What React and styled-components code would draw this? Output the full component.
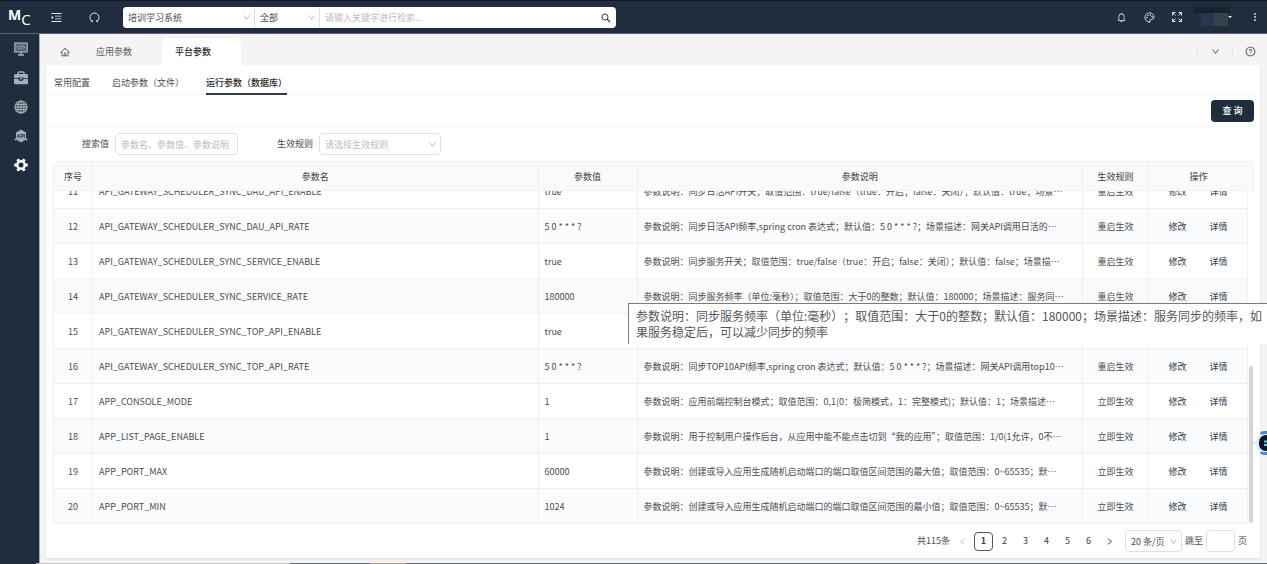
import React,{Component} from 'react';
import styled,{createGlobalStyle} from 'styled-components';
import {
  AiOutlineMenuUnfold,
  AiOutlineHome,
  AiOutlineBell,
  AiOutlineDown,
  AiOutlineLeft,
  AiOutlineRight,
  AiOutlineQuestionCircle,
} from 'react-icons/ai';
import { BsThreeDotsVertical } from 'react-icons/bs';
import { Palette } from 'lucide-react';

const GlobalStyle = createGlobalStyle`
  * {
    box-sizing: border-box;
  }
  body {
    margin: 0;
    font-family: "Noto Sans CJK SC", "Noto Sans", sans-serif;
    font-size: 9px;
    line-height: 16px;
    color: #4d4d4d;
    background: #f4f4f4;
  }
  button, input, select {
    font: inherit;
    color: inherit;
    margin: 0;
    padding: 0;
    border: 0;
    outline: 0;
    background: transparent;
  }
  button {
    cursor: pointer;
  }
  a {
    color: inherit;
    text-decoration: none;
  }
`;

const Page = styled.div`
  display: flex;
  flex-direction: column;
  height: 100vh;
  overflow: hidden;
`;

const TopBar = styled.header`
  display: flex;
  align-items: center;
  flex: none;
  height: 34px;
  padding: 0 0 0 8px;
  border-top: 1px solid #111821;
  border-bottom: 1px solid #5d6677;
  background: #202d3e;
  color: #e3e6ea;
`;

const Logo = styled.a`
  display: flex;
  width: 40px;
  font-family: "Open Sans", sans-serif;
  font-size: 14px;
  line-height: 16px;
  font-weight: 700;
  color: #fff;
`;

const LogoTail = styled.span`
  padding-top: 4px;
  font-size: 15px;
  font-weight: 400;
`;

const IconButton = styled.button`
  display: flex;
  align-items: center;
  justify-content: center;
  width: ${props => props.$width || 28}px;
  height: 22px;
  font-size: ${props => props.$size || 11}px;
`;

const LeftTools = styled.div`
  display: flex;
  gap: 21px;
  width: 75px;
`;

const RightTools = styled.div`
  display: flex;
  align-items: center;
  margin-left: auto;
`;

const User = styled.button`
  position: relative;
  width: 36px;
  height: 20px;
  margin: 0 12px 0 3px;
  background: linear-gradient(#18212d 6px, transparent 6px);

  &::before {
    content: '';
    position: absolute;
    left: 7px;
    top: 6px;
    width: 27px;
    height: 13px;
    background: linear-gradient(90deg, #28364e 13px, #36434f 13px);
  }
  &::after {
    content: '';
    position: absolute;
    right: -2px;
    top: 9px;
    border: 2px solid transparent;
    border-top-color: #fff;
  }
`;

const GlobalSearch = styled.form`
  display: flex;
  width: 493px;
  height: 21px;
  border-radius: 4px;
  overflow: hidden;
  background: #fff;
  color: #444;
`;

const SelectWrap = styled.div`
  display: flex;
  align-items: center;
  width: ${props => props.$width}px;
  height: ${props => (props.$bare ? 21 : 22)}px;
  border: ${props => (props.$bare ? '0' : '1px solid #e0e0e0')};
  border-right: 1px solid #e0e0e0;
  border-radius: ${props => (props.$bare ? 0 : 4)}px;
  padding-right: 3px;
  background: #fff;

  select {
    flex: 1;
    min-width: 0;
    height: 100%;
    padding: 1px 0 0 5px;
    appearance: none;
    color: ${props => (props.$empty ? '#bdbdbd' : '#4d4d4d')};
  }
  svg {
    flex: none;
    width: 9px;
    height: 9px;
    margin-left: -9px;
    color: #b5b5b5;
    pointer-events: none;
  }
`;

const SearchInput = styled.input`
  flex: 1;
  min-width: 0;
  padding: 1px 0 0 5px;

  &::placeholder {
    color: #bdbdbd;
  }
`;

const Content = styled.div`
  display: flex;
  flex: 1;
  min-height: 0;
`;

const Sidebar = styled.nav`
  display: flex;
  flex-direction: column;
  align-items: center;
  flex: none;
  width: 40px;
  padding-left: 2px;
  border-right: 1px solid #a6abb3;
  background: #202d3e;
`;

const SideLink = styled.a`
  display: flex;
  align-items: center;
  height: 29px;
  color: ${props => (props.$active ? '#fff' : '#a5acb5')};
`;

const Main = styled.main`
  display: flex;
  flex-direction: column;
  flex: 1;
  min-width: 0;
  padding: 4px 7px 5px 6px;
`;

const Tabs = styled.div`
  display: flex;
  align-items: center;
  flex: none;
  height: 27px;
  padding-left: 14px;
`;

const PageTab = styled.button`
  position: relative;
  width: 79px;
  height: 27px;
  padding: 1px 0 0 13px;
  text-align: left;
  border-radius: 6px 6px 0 0;
  color: ${props => (props.$active ? '#262626' : '#595959')};
  font-weight: ${props => (props.$active ? 500 : 400)};
  background: ${props => (props.$active ? '#fff' : 'transparent')};

  &::before, &::after {
    content: '';
    display: ${props => (props.$active ? 'block' : 'none')};
    position: absolute;
    bottom: 0;
    width: 4px;
    height: 4px;
  }
  &::before {
    left: -4px;
    background: radial-gradient(circle at 0 0, transparent 4px, #fff 4px);
  }
  &::after {
    right: -4px;
    background: radial-gradient(circle at 100% 0, transparent 4px, #fff 4px);
  }
`;

const HomeButton = styled.button`
  display: flex;
  width: 23px;
  padding-top: 1px;
  font-size: 10px;
  color: #444;
`;

const TabTools = styled.div`
  display: flex;
  align-items: center;
  margin-left: auto;

  button {
    width: 35px;
    height: 8px;
    border-left: 1px solid #e4e4e4;
  }
  button:last-child {
    padding-left: 8px;
    width: 28px;
  }
`;

const Panel = styled.section`
  display: flex;
  flex-direction: column;
  flex: 1;
  min-height: 0;
  background: #fff;
  box-shadow: 0 1px 2px #dcdcdc;
`;

const SubTabs = styled.div`
  display: flex;
  flex: none;
  gap: 22px;
  height: 30px;
  padding: 0 8px;
  border-bottom: 1px solid #f3f3f3;
`;

const SubTab = styled.button`
  height: 30px;
  padding-top: 7px;
  border-bottom: 2px solid ${props => (props.$active ? '#2b3a4d' : 'transparent')};
  color: ${props => (props.$active ? '#262626' : '#4d4d4d')};
  font-weight: ${props => (props.$active ? 500 : 400)};
`;

const Actions = styled.div`
  display: flex;
  align-items: center;
  justify-content: flex-end;
  flex: none;
  height: 32px;
  padding-right: 6px;
  border-bottom: 1px solid #f5f5f5;
`;

const QueryButton = styled.button`
  width: 43px;
  height: 22px;
  padding-top: 1px;
  border-radius: 4px;
  background: #202d3e;
  color: #fff;
  font-weight: 500;
`;

const Filters = styled.form`
  display: flex;
  flex: none;
  gap: 39px;
  height: 34px;
  padding: 6px 36px 0;
`;

const Field = styled.div`
  display: flex;
  align-items: center;
  gap: 6px;
  height: 22px;
`;

const TextInput = styled.input`
  width: ${props => props.$width}px;
  height: 22px;
  padding: 0 5px;
  border: 1px solid #e0e0e0;
  border-radius: 4px;

  &::placeholder {
    color: #bdbdbd;
  }
`;

const TableArea = styled.div`
  position: relative;
  display: flex;
  flex-direction: column;
  flex: 1;
  min-height: 0;
  padding: 0 6px 0 7px;
`;

const HeadWrap = styled.div`
  flex: none;
  padding-right: 5px;
  border: 1px solid #f0f0f0;
  border-radius: 6px 6px 0 0;
  background: #fafafa;
`;

const BodyWrap = styled.div`
  display: flex;
  flex-direction: column;
  justify-content: flex-end;
  flex: 1;
  min-height: 0;
  overflow: hidden;
  margin-right: 6px;
  border-left: 1px solid #f0f0f0;
`;

const Table = styled.table`
  width: 100%;
  table-layout: fixed;
  border-collapse: separate;
  border-spacing: 0;

  th {
    height: 28px;
    padding: 1px 0 0;
    font-weight: 400;
    color: #404040;
    border-right: 1px solid #f0f0f0;
  }
  th:last-child {
    border-right: 0;
  }
`;

const Row = styled.tr`
  background: ${props => (props.$hover ? '#fafafa' : props.$striped ? '#fafbfd' : '#fff')};
`;

const Cell = styled.td`
  height: 35px;
  padding: 2px 6px 0;
  border-right: 1px solid #f0f0f0;
  border-bottom: 1px solid #f0f0f0;
  text-align: ${props => (props.$center ? 'center' : 'left')};
  white-space: nowrap;
  overflow: hidden;
`;

const RowLinks = styled.div`
  display: flex;
  justify-content: center;
  gap: 23px;
  color: #2f3c4c;
`;

const ScrollThumb = styled.div`
  position: absolute;
  right: 7px;
  bottom: 1px;
  width: 4px;
  height: 157px;
  border-radius: 2px;
  background: #d5d5d5;
`;

const Tooltip = styled.div`
  position: absolute;
  left: 582px;
  right: -7px;
  top: 142px;
  min-height: 41px;
  padding: 4px 0 4px 7px;
  border-top: 1px solid #7b7b7b;
  border-left: 1px solid #7b7b7b;
  background: #fff;
  font-size: 12px;
  line-height: 16px;
  text-spacing-trim: space-all;
  color: #575757;
`;

const Pagination = styled.div`
  display: flex;
  align-items: center;
  flex: none;
  height: 34px;
  padding-right: 13px;
  justify-content: flex-end;
`;

const PageButton = styled.button`
  display: flex;
  align-items: center;
  justify-content: center;
  width: 19px;
  height: 19px;
  margin-right: 2px;
  border: 1px solid ${props => (props.$active ? '#4a586a' : 'transparent')};
  border-radius: 4px;
  font-weight: ${props => (props.$active ? 700 : 400)};
  color: ${props => (props.$muted ? '#bdbdbd' : '#404040')};
`;

const Total = styled.span`
  margin-right: 3px;
`;

const PageTools = styled.div`
  display: flex;
  align-items: center;
  gap: 3px;
  margin-left: 4px;

  label {
    display: flex;
    align-items: center;
    gap: 3px;
  }
`;

const Assistant = styled.button`
  position: fixed;
  right: 0;
  bottom: 108px;
  display: flex;
`;

const TaskStrip = styled.div`
  flex: none;
  height: 1px;
  background: linear-gradient(
    90deg,
    #202d3e 36px,
    #c4c4c4 36px 290px,
    #5f6874 290px 370px,
    #b79b80 370px 406px,
    #5f6874 406px
  );
`;

const DesktopIcon = () => (
  <svg width="14" height="14" viewBox="0 0 28 28" fill="none" stroke="currentColor">
    <rect x="1.5" y="2" width="25" height="18" strokeWidth="2.4" fill="currentColor" fillOpacity=".45" />
    <path d="M10 7.500 7 10.500l3 3M18 7.500l3 3-3 3M15.500 7l-3 7" strokeWidth="2" />
    <path d="M14 19v6M8 26h12" strokeWidth="3" />
  </svg>
);

const BriefcaseIcon = () => (
  <svg width="14" height="14" viewBox="0 0 28 28">
    <path d="M8 7V4a2 2 0 0 1 2-2h8a2 2 0 0 1 2 2v3" fill="none" stroke="currentColor" strokeWidth="2.800" />
    <path d="M3 6h22a3 3 0 0 1 3 3v5h-9v-1H9v1H0V9a3 3 0 0 1 3-3z" fill="currentColor" />
    <path d="M0 15.500h9c0 3 2 4.500 5 4.500s5-1.500 5-4.500h9v9a2 2 0 0 1-2 2H2a2 2 0 0 1-2-2z" fill="currentColor" />
    <circle cx="14" cy="15.500" r="2" fill="currentColor" />
  </svg>
);

const GlobeIcon = () => (
  <svg width="14" height="14" viewBox="0 0 28 28" fill="none" stroke="currentColor" strokeWidth="2.200">
    <circle cx="14" cy="14" r="12" fill="currentColor" fillOpacity=".15" />
    <ellipse cx="14" cy="14" rx="6" ry="12" />
    <path d="M14 2v24M4 9h20M4 19h20" />
    <path d="M1 14h26" strokeWidth="2.600" />
  </svg>
);

const ApiIcon = () => (
  <svg width="14" height="14" viewBox="0 0 28 28">
    <path d="M14 1 24 7v14l-10 6-10-6V7z" fill="currentColor" />
    <circle cx="3" cy="21" r="2" fill="currentColor" />
    <circle cx="25" cy="21" r="2" fill="currentColor" />
    <text x="14" y="18" textAnchor="middle" fontSize="10" fontWeight="700" fontFamily="Liberation Sans, sans-serif" fill="#202d3e">API</text>
  </svg>
);

const GearIcon = () => (
  <svg width="14" height="14" viewBox="0 0 28 28" stroke="currentColor" fill="none">
    <circle cx="14" cy="14" r="7.500" strokeWidth="5" />
    {[30, 90, 150, 210, 270, 330].map(angle => (
      <path key={angle} d="M14 5V0.500" strokeWidth="6" transform={`rotate(${angle} 14 14)`} />
    ))}
  </svg>
);

const ReloadIcon = () => (
  <svg width="11" height="11" viewBox="0 0 22 22" fill="none" stroke="currentColor" strokeWidth="2">
    <path d="M6.500 18.800A9 9 0 1 1 15.500 18.800" />
    <path d="M3 19.500H7V16M19 19.500H15V16" strokeWidth="1.400" />
  </svg>
);

const SearchIcon = () => (
  <svg width="10" height="10" viewBox="0 0 20 20" fill="none" stroke="currentColor">
    <circle cx="8" cy="8" r="6" strokeWidth="2" />
    <path d="M12.500 12.500 18 18" strokeWidth="3" />
  </svg>
);

const ExpandIcon = () => (
  <svg width="10" height="10" viewBox="0 0 20 20" fill="none" stroke="currentColor" strokeWidth="2">
    <path d="M1 7V1h6M13 1h6v6M19 13v6h-6M7 19H1v-6" />
    <path d="M2 2l5 5M18 2l-5 5M18 18l-5-5M2 18l5-5" />
  </svg>
);

const AssistantIcon = () => (
  <svg width="15" height="26" viewBox="0 0 15 26">
    <path d="M0 13h6" stroke="#bcd3f5" />
    <circle cx="15" cy="13" r="11" fill="#dfeafc" />
    <path d="M9 4Q10 2.500 12 2.500H15M9 22Q10 23.500 12 23.500H15" stroke="#3f86f7" strokeWidth="3" fill="none" />
    <rect x="7" y="5" width="18" height="16" rx="7" fill="#0a1428" />
    <path d="M12 11.500h3M12 15h3" stroke="#45d6e8" strokeWidth="2" />
  </svg>
);

const sideItems = [
  { id: 'console', label: '控制台', icon: <DesktopIcon /> },
  { id: 'tools', label: '工具', icon: <BriefcaseIcon /> },
  { id: 'network', label: '网络', icon: <GlobeIcon /> },
  { id: 'api', label: '接口', icon: <ApiIcon /> },
  { id: 'setting', label: '设置', icon: <GearIcon /> },
];

const restart = '重启生效';
const instant = '立即生效';

const params = [
  { id: 11, name: 'API_GATEWAY_SCHEDULER_SYNC_DAU_API_ENABLE', value: 'true', rule: restart, desc: '参数说明：同步日活API开关；取值范围：true/false（true：开启；false：关闭）；默认值：true；场景…' },
  { id: 12, name: 'API_GATEWAY_SCHEDULER_SYNC_DAU_API_RATE', value: '5 0 * * * ?', rule: restart, desc: '参数说明：同步日活API频率,spring cron 表达式；默认值：5 0 * * * ?；场景描述：网关API调用日活的…' },
  { id: 13, name: 'API_GATEWAY_SCHEDULER_SYNC_SERVICE_ENABLE', value: 'true', rule: restart, desc: '参数说明：同步服务开关；取值范围：true/false（true：开启；false：关闭）；默认值：false；场景描…' },
  { id: 14, name: 'API_GATEWAY_SCHEDULER_SYNC_SERVICE_RATE', value: '180000', rule: restart, desc: '参数说明：同步服务频率（单位:毫秒）；取值范围：大于0的整数；默认值：180000；场景描述：服务同…' },
  { id: 15, name: 'API_GATEWAY_SCHEDULER_SYNC_TOP_API_ENABLE', value: 'true', rule: restart, desc: '' },
  { id: 16, name: 'API_GATEWAY_SCHEDULER_SYNC_TOP_API_RATE', value: '5 0 * * * ?', rule: restart, desc: '参数说明：同步TOP10API频率,spring cron 表达式；默认值：5 0 * * * ?；场景描述：网关API调用top10…' },
  { id: 17, name: 'APP_CONSOLE_MODE', value: '1', rule: instant, desc: '参数说明：应用前端控制台模式；取值范围：0,1(0：极简模式，1：完整模式)；默认值：1；场景描述…' },
  { id: 18, name: 'APP_LIST_PAGE_ENABLE', value: '1', rule: instant, desc: '参数说明：用于控制用户操作后台，从应用中能不能点击切到“我的应用”；取值范围：1/0(1允许，0不…' },
  { id: 19, name: 'APP_PORT_MAX', value: '60000', rule: instant, desc: '参数说明：创建或导入应用生成随机启动端口的端口取值区间范围的最大值；取值范围：0~65535；默…' },
  { id: 20, name: 'APP_PORT_MIN', value: '1024', rule: instant, desc: '参数说明：创建或导入应用生成随机启动端口的端口取值区间范围的最小值；取值范围：0~65535；默…' },
];

const NarrowCol = styled.col`
  width: ${props => props.$width}px;
`;

const Columns = () => (
  <colgroup>
    <NarrowCol $width={39} />
    <col />
    <NarrowCol $width={99} />
    <col />
    <NarrowCol $width={66} />
    <NarrowCol $width={99} />
  </colgroup>
);

class App extends Component {
  state = {
    hoveredId: 14,
    currentPage: 1,
    activeSubTab: '运行参数（数据库）',
    searchValue: '',
    keyword: '',
    jumpTo: '',
  }

  changePage = page => {
    this.setState({ currentPage: page })
  }

  changeSubTab = name => {
    this.setState({ activeSubTab: name })
  }

  changeInput = event => {
    this.setState({ [event.target.name]: event.target.value })
  }

  renderTopBar() {
    const {keyword} = this.state
    return (
      <TopBar>
        <Logo href="#home">M<LogoTail>C</LogoTail></Logo>
        <LeftTools>
          <IconButton $width={17} $size={13} aria-label="展开菜单"><AiOutlineMenuUnfold /></IconButton>
          <IconButton $width={17} aria-label="刷新"><ReloadIcon /></IconButton>
        </LeftTools>
        <GlobalSearch>
          <SelectWrap $width={132} $bare>
            <select aria-label="系统"><option>培训学习系统</option></select>
            <AiOutlineDown />
          </SelectWrap>
          <SelectWrap $width={65} $bare>
            <select aria-label="范围"><option>全部</option></select>
            <AiOutlineDown />
          </SelectWrap>
          <SearchInput
            name="keyword"
            aria-label="关键字"
            placeholder="请输入关键字进行检索..."
            value={keyword}
            onChange={this.changeInput}
          />
          <IconButton type="button" $width={20} aria-label="检索"><SearchIcon /></IconButton>
        </GlobalSearch>
        <RightTools>
          <IconButton aria-label="通知"><AiOutlineBell /></IconButton>
          <IconButton aria-label="主题"><Palette size={11} /></IconButton>
          <IconButton aria-label="全屏"><ExpandIcon /></IconButton>
          <User aria-label="用户" />
          <IconButton $width={25} $size={10} aria-label="更多"><BsThreeDotsVertical /></IconButton>
        </RightTools>
      </TopBar>
    )
  }

  renderTable() {
    const {hoveredId} = this.state
    return (
      <TableArea>
        <HeadWrap>
          <Table>
            <Columns />
            <thead>
              <tr>
                <th>序号</th>
                <th>参数名</th>
                <th>参数值</th>
                <th>参数说明</th>
                <th>生效规则</th>
                <th>操作</th>
              </tr>
            </thead>
          </Table>
        </HeadWrap>
        <BodyWrap>
          <Table>
            <Columns />
            <tbody>
              {params.map(item => (
                <Row key={item.id} $striped={item.id % 2 === 0} $hover={item.id === hoveredId}>
                  <Cell $center>{item.id}</Cell>
                  <Cell>{item.name}</Cell>
                  <Cell>{item.value}</Cell>
                  <Cell>{item.desc}</Cell>
                  <Cell $center>{item.rule}</Cell>
                  <Cell $center>
                    <RowLinks>
                      <a href="#edit">修改</a>
                      <a href="#detail">详情</a>
                    </RowLinks>
                  </Cell>
                </Row>
              ))}
            </tbody>
          </Table>
        </BodyWrap>
        <ScrollThumb />
        <Tooltip role="tooltip">
          参数说明：同步服务频率（单位:毫秒）；取值范围：大于0的整数；默认值：180000；场景描述：服务同步的频率，如果服务稳定后，可以减少同步的频率
        </Tooltip>
      </TableArea>
    )
  }

  renderPagination() {
    const {currentPage,jumpTo} = this.state
    return (
      <Pagination>
        <Total>共115条</Total>
        <PageButton $muted aria-label="上一页"><AiOutlineLeft /></PageButton>
        {[1, 2, 3, 4, 5, 6].map(page => (
          <PageButton key={page} $active={page === currentPage} onClick={() => this.changePage(page)}>
            {page}
          </PageButton>
        ))}
        <PageButton aria-label="下一页"><AiOutlineRight /></PageButton>
        <PageTools>
          <SelectWrap $width={57}>
            <select aria-label="每页条数"><option>20 条/页</option></select>
            <AiOutlineDown />
          </SelectWrap>
          <label>
            跳至
            <TextInput $width={29} name="jumpTo" value={jumpTo} onChange={this.changeInput} />
            页
          </label>
        </PageTools>
      </Pagination>
    )
  }

  render() {
    const {activeSubTab,searchValue} = this.state
    return (
      <Page lang="zh-CN">
        <GlobalStyle />
        {this.renderTopBar()}
        <Content>
          <Sidebar>
            {sideItems.map(item => (
              <SideLink key={item.id} href={`#${item.id}`} aria-label={item.label} $active={item.id === 'setting'}>
                {item.icon}
              </SideLink>
            ))}
          </Sidebar>
          <Main>
            <Tabs>
              <HomeButton aria-label="首页"><AiOutlineHome /></HomeButton>
              <PageTab>应用参数</PageTab>
              <PageTab $active>平台参数</PageTab>
              <TabTools>
                <IconButton $size={9} aria-label="标签列表"><AiOutlineDown /></IconButton>
                <IconButton aria-label="帮助"><AiOutlineQuestionCircle /></IconButton>
              </TabTools>
            </Tabs>
            <Panel>
              <SubTabs>
                {['常用配置', '启动参数（文件）', '运行参数（数据库）'].map(name => (
                  <SubTab key={name} $active={name === activeSubTab} onClick={() => this.changeSubTab(name)}>
                    {name}
                  </SubTab>
                ))}
              </SubTabs>
              <Actions>
                <QueryButton>查 询</QueryButton>
              </Actions>
              <Filters>
                <Field>
                  <label htmlFor="searchValue">搜索值</label>
                  <TextInput
                    id="searchValue"
                    name="searchValue"
                    $width={123}
                    placeholder="参数名、参数值、参数说明"
                    value={searchValue}
                    onChange={this.changeInput}
                  />
                </Field>
                <Field>
                  <label htmlFor="rule">生效规则</label>
                  <SelectWrap $width={122} $empty>
                    <select id="rule"><option>请选择生效规则</option></select>
                    <AiOutlineDown />
                  </SelectWrap>
                </Field>
              </Filters>
              {this.renderTable()}
              {this.renderPagination()}
            </Panel>
          </Main>
        </Content>
        <TaskStrip />
        <Assistant aria-label="助手"><AssistantIcon /></Assistant>
      </Page>
    )
  }
}

export default App
